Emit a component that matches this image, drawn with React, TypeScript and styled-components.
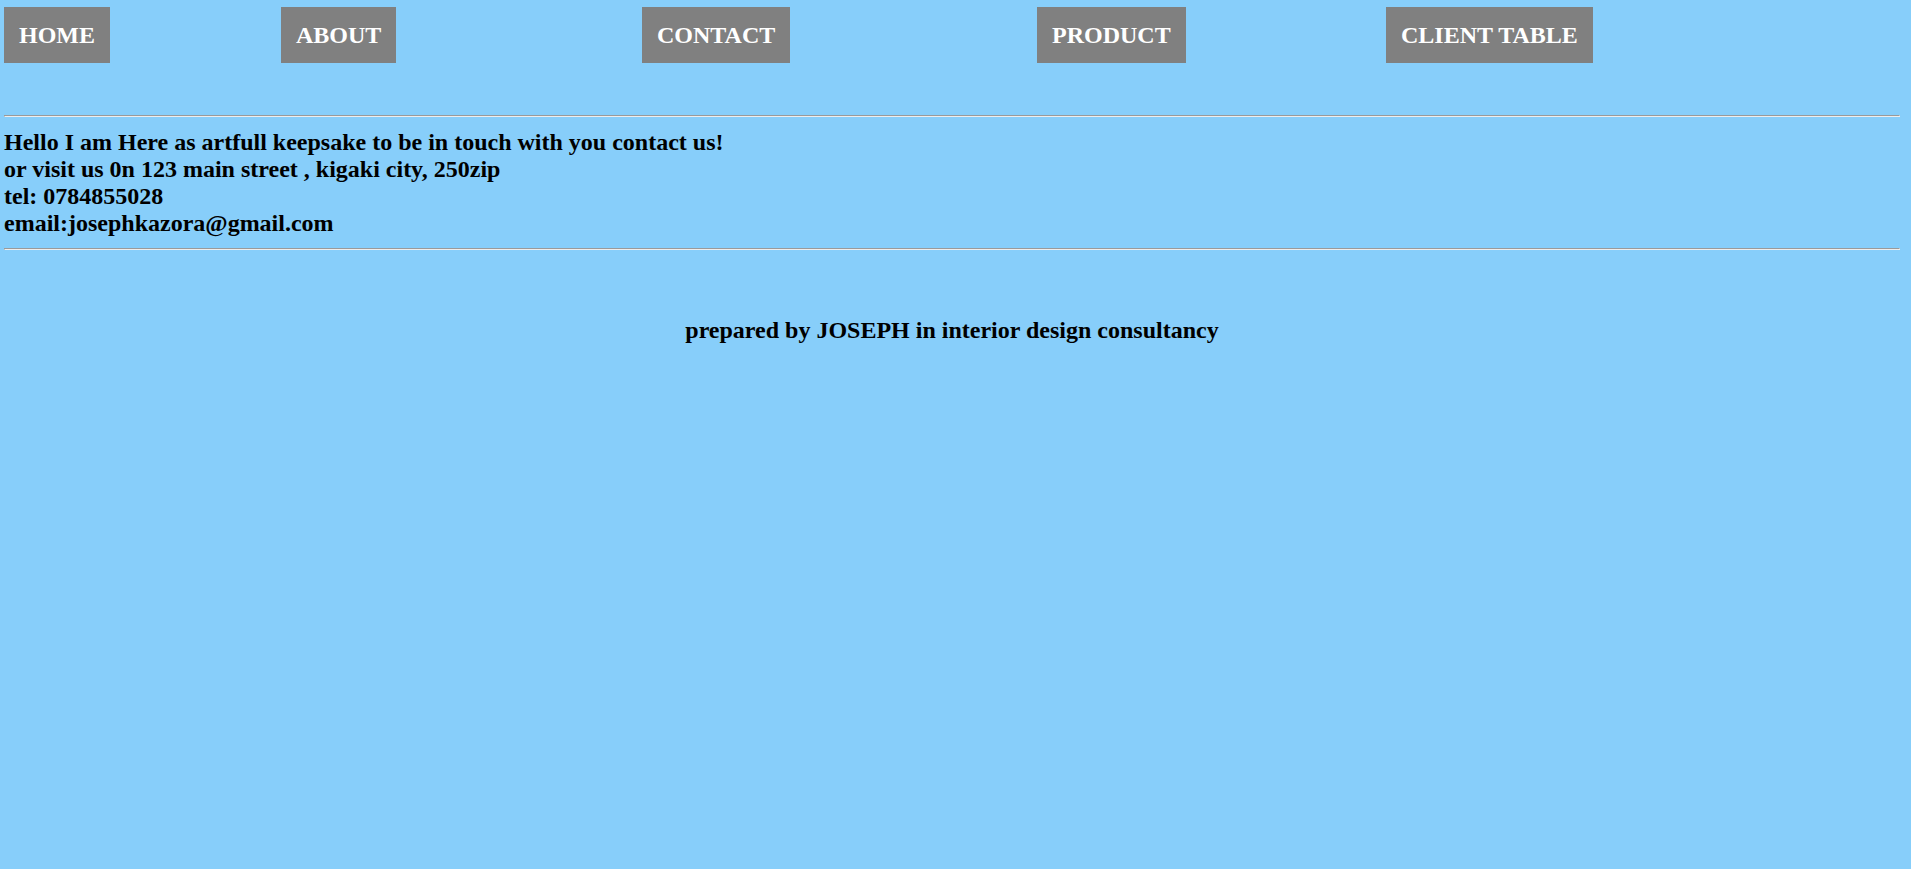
import React from 'react';
import styled, { createGlobalStyle } from 'styled-components';

const GlobalStyle = createGlobalStyle`
    html, body {
        margin: 0;
        background: #87cefa;
    }
    body {
        font-family: 'Liberation Serif', 'Times New Roman', serif;
        color: #000;
    }
`;

const links = [
    { label: 'HOME', col: '277px' },
    { label: 'ABOUT', col: '361px' },
    { label: 'CONTACT', col: '395px' },
    { label: 'PRODUCT', col: '349px' },
    { label: 'CLIENT TABLE', col: 'auto' },
];

const Page = styled.div`
    padding: 7px 11px 0 4px;
    min-height: 862px;
`;

const Nav = styled.nav<{ $cols: string }>`
    display: grid;
    grid-template-columns: ${(p) => p.$cols};
    align-items: start;
`;

const NavLink = styled.a`
    justify-self: start;
    display: inline-block;
    background: #808080;
    color: #fff;
    font-size: 24px;
    font-weight: bold;
    text-decoration: none;
    padding: 15px 15px 14px;
    cursor: pointer;
`;

const Rule = styled.hr<{ $top: number }>`
    margin: ${(p) => p.$top}px 0 0;
    border: 1px inset;
    color: gray;
    height: 0;
`;

const Contact = styled.p`
    margin: 12px 0 11px;
    font-size: 24px;
    font-weight: bold;
    line-height: normal;
`;

const Footer = styled.h3`
    margin: 67px 0 0;
    font-size: 24px;
    font-weight: bold;
    text-align: center;
`;

const App = () => {
    return (
        <>
            <GlobalStyle />
            <Page>
                <Nav $cols={links.map((l) => l.col).join(' ')}>
                    {links.map((l) => (
                        <NavLink key={l.label}>{l.label}</NavLink>
                    ))}
                </Nav>
                <Rule $top={52} />
                <Contact>
                    Hello I am Here as artfull keepsake to be in touch with you contact us!
                    <br />
                    or visit us 0n 123 main street , kigaki city, 250zip
                    <br />
                    tel: 0784855028
                    <br />
                    email:josephkazora@gmail.com
                </Contact>
                <Rule $top={0} />
                <Footer>prepared by JOSEPH in interior design consultancy</Footer>
            </Page>
        </>
    );
};

export default App;
